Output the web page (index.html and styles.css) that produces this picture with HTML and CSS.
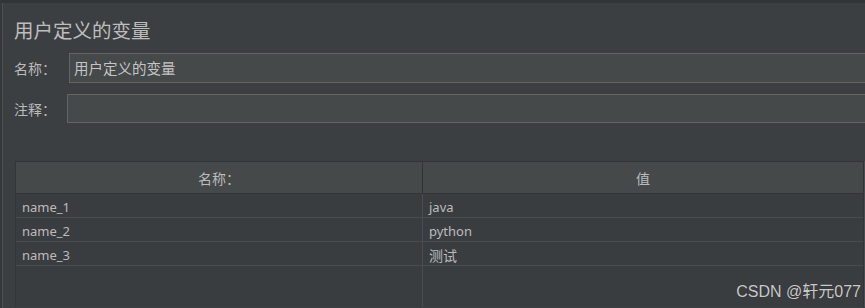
FILE: index.html
```html
<!DOCTYPE html>
<html lang="zh-CN">
<head>
<meta charset="UTF-8" />
<title>用户定义的变量</title>
<link rel="stylesheet" href="styles.css">
</head>
<body>
<div class="frame">
  <h1 class="title">用户定义的变量</h1>

  <div class="field field-name">
    <label>名称：</label>
    <div class="input">用户定义的变量</div>
  </div>
  <div class="field field-comment">
    <label>注释：</label>
    <div class="input"></div>
  </div>

  <div class="grid">
    <div class="grid-head">
      <div class="cell col-name cjk">名称：</div>
      <div class="cell col-value cjk">值</div>
    </div>
    <div class="grid-row">
      <div class="cell col-name">name_1</div>
      <div class="cell col-value">java</div>
    </div>
    <div class="grid-row">
      <div class="cell col-name">name_2</div>
      <div class="cell col-value">python</div>
    </div>
    <div class="grid-row">
      <div class="cell col-name">name_3</div>
      <div class="cell col-value cjk">测试</div>
    </div>
    <div class="grid-fill">
      <div class="cell col-name"></div>
      <div class="cell col-value"></div>
    </div>
  </div>
</div>
<div class="watermark">CSDN @轩元077</div>
</body>
</html>
```

FILE: styles.css
```css
html, body { margin: 0; height: 100%; overflow: hidden; }
body { background: #3c3f41; color: #bbbbbb; font-family: "Noto Sans", "Noto Sans CJK SC", sans-serif; position: relative; }
.frame { height: 305px; border-top: 3px solid #323538; border-left: 2px solid #36393b; box-shadow: inset 1px 0 0 #4d5053; padding-left: 12px; }
.title { margin: 0; padding-top: 16px; font-size: 19.5px; line-height: 24px; font-weight: normal; color: #bdbdbd; }

.field { display: flex; align-items: center; margin-right: -6px; }
.field label { font-size: 14px; color: #bbbbbb; }
.field-name { margin-top: 10px; }
.field-name label { width: 55px; }
.field-name .input { height: 28px; }
.field-comment { margin-top: 11px; }
.field-comment label { width: 53px; }
.field-comment .input { height: 27px; }
.input { flex: 1; background: #45494a; border: 1px solid #646464; box-sizing: content-box; font-size: 14.5px; line-height: 28px; padding-left: 4px; color: #c4c4c4; }

.grid { margin-top: 38px; margin-left: 1px; margin-right: 1px; height: 146px; display: flex; flex-direction: column; background: #3a3d40; border-left: 1px solid #323436; border-right: 1px solid #323436; box-shadow: 2px 0 0 #4a4d50; }
.grid-head, .grid-row, .grid-fill { display: flex; }
.grid-head { background: #45494a; border-top: 1px solid #323436; border-bottom: 1px solid #323436; height: 31px; }
.grid-row { height: 23px; border-bottom: 1px solid #4a4d50; }
.grid-row .cell { padding-top: 2px; }
.grid-fill { flex: 1; }
.cell { font-size: 13px; display: flex; align-items: center; box-sizing: border-box; }
.cell.cjk { font-size: 14px; }
.col-name { width: 407px; border-right: 1px solid #4a4d50; padding-left: 6px; }
.col-value { flex: 1; padding-left: 6px; }
.grid-head .cell { justify-content: center; padding-left: 0; }
.grid-head .col-name { border-right-color: #323436; }

.watermark { position: absolute; right: 4px; bottom: 6px; font-family: "Liberation Sans", "Noto Sans CJK SC", sans-serif; font-size: 16px; color: #c9c9c9; text-shadow: 0 0 1px #2a2a2a; }
```
